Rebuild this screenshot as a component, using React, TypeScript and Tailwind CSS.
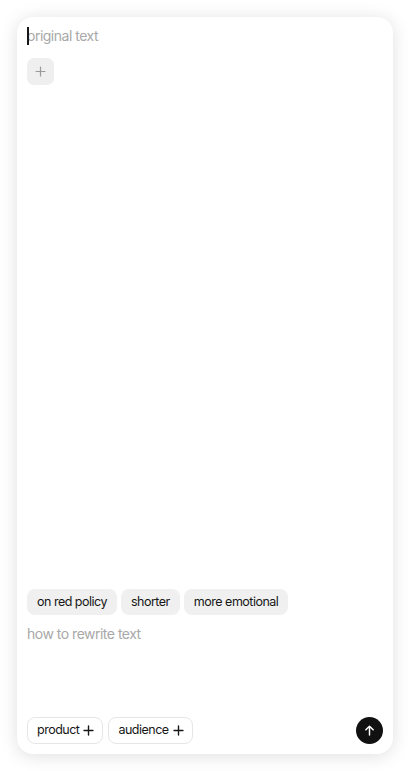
import React from "react"

function PlusIcon({ className, weight = 1.5 }: { className?: string; weight?: number }) {
  return (
    <svg viewBox="0 0 16 16" className={className} fill="none" stroke="currentColor" strokeWidth={weight} strokeLinecap="round">
      <path d="M8 2.5v11M2.5 8h11" />
    </svg>
  )
}

export default function App() {
  const suggestions = ["on red policy", "shorter", "more emotional"]
  const tags = ["product", "audience"]

  return (
    <div className="h-[771px] w-full bg-white p-[17px] font-['Inter',sans-serif]">
      <div className="flex h-full flex-col rounded-[16px] bg-white px-[10px] pt-[10px] pb-[10px] shadow-[0_2px_18px_rgba(0,0,0,0.13)]">
        {/* original text input */}
        <div className="relative h-[18px]">
          <span className="absolute left-0 top-0 h-[18px] w-[2px] bg-neutral-900" />
          <div className="text-[14px] leading-[18px] tracking-[-0.5px] text-[#a8a8a8]">original text</div>
        </div>

        <button className="mt-[13px] flex h-[27px] w-[27px] items-center justify-center rounded-[7px] bg-[#efefef] text-[#9a9a9a]">
          <PlusIcon className="h-[13px] w-[13px]" />
        </button>

        <div className="flex-1" />

        {/* suggestion chips */}
        <div className="flex gap-[4px]">
          {suggestions.map((s) => (
            <div
              key={s}
              className="flex h-[26px] items-center rounded-[8px] bg-[#f0f0f0] px-[10px] text-[12.5px] tracking-[-0.5px] text-neutral-900"
            >
              {s}
            </div>
          ))}
        </div>

        <div className="mt-[10px] h-[92px] text-[14px] leading-[18px] tracking-[-0.5px] text-[#a8a8a8]">how to rewrite text</div>

        {/* bottom row */}
        <div className="flex items-center justify-between">
          <div className="flex gap-[5px]">
            {tags.map((t) => (
              <div
                key={t}
                className="flex h-[27px] items-center gap-[3px] rounded-[8px] border border-[#e6e6e6] bg-white pl-[9px] pr-[7px] text-[12.5px] tracking-[-0.5px] text-neutral-900"
              >
                {t}
                <PlusIcon className="h-[13px] w-[13px]" weight={1.7} />
              </div>
            ))}
          </div>
          <button className="flex h-[27px] w-[27px] items-center justify-center rounded-full bg-[#111111] text-white">
            <svg viewBox="0 0 16 16" className="h-[13px] w-[13px]" fill="none" stroke="currentColor" strokeWidth={1.8} strokeLinecap="round" strokeLinejoin="round">
              <path d="M8 13.5V2.8M3.5 7.2L8 2.7l4.5 4.5" />
            </svg>
          </button>
        </div>
      </div>
    </div>
  )
}
